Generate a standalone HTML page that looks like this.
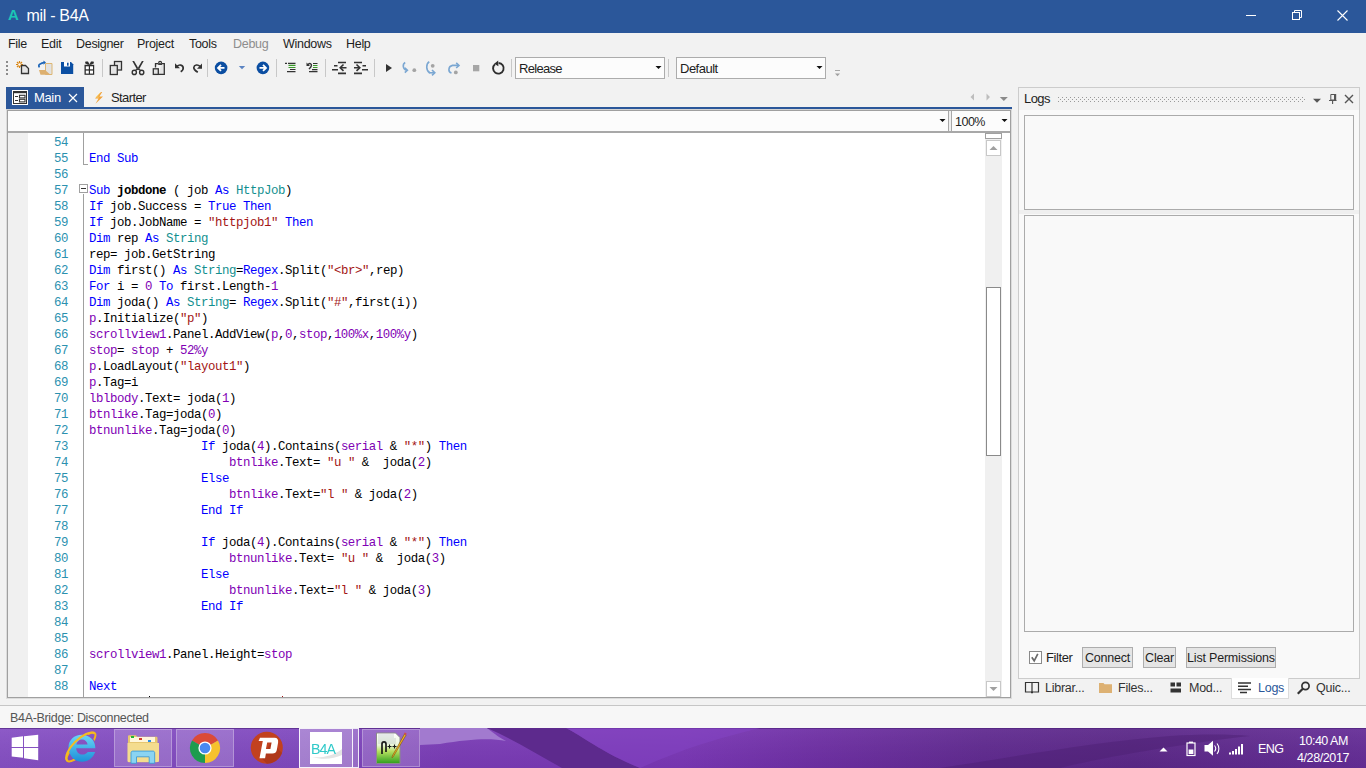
<!DOCTYPE html>
<html><head><meta charset="utf-8">
<style>
*{margin:0;padding:0;box-sizing:border-box}
html,body{width:1366px;height:768px;overflow:hidden;background:#F2F2F2;font-family:"Liberation Sans",sans-serif;position:relative}
.a{position:absolute}
svg{position:absolute;overflow:visible}
.menu{top:32px;height:25px;font-size:12.5px;color:#1E1E1E;line-height:25px;white-space:nowrap;letter-spacing:-0.3px}
.sep{position:absolute;width:1px;height:18px;background:#C4C4C4;top:59px}
.code{font-family:"Liberation Mono",monospace;font-size:12.4px;letter-spacing:-0.44px;line-height:16px;white-space:pre;color:#000;}
.ln{color:#2B91AF;text-align:right}
.k{color:#0000FF}
.ty{color:#128F8F}
.s{color:#A31515}
.v{color:#8000B4}
.n{color:#8000B4}
.b{font-weight:bold}
i{font-style:normal}
.ui{font-size:12.5px;color:#1E1E1E;white-space:nowrap;line-height:15px}
.btn{position:absolute;top:647px;height:21px;background:#E5E5E5;border:1px solid #ADADAD;font-size:12.5px;color:#1E1E1E;line-height:20px;text-align:center;white-space:nowrap;letter-spacing:-0.2px}
.tk{position:absolute;top:729px;height:39px;background:rgba(255,255,255,0.18);border:1px solid rgba(255,255,255,0.28)}
</style></head><body>
<!-- TITLE -->
<div class="a" style="left:0;top:0;width:1366px;height:33px;background:#2B579A"></div>
<div class="a" style="left:8px;top:6px;color:#1BC6B6;font-size:15px;font-weight:bold;line-height:18px">A</div>
<div class="a" style="left:26.5px;top:6px;color:#fff;font-size:16px;line-height:19px;white-space:nowrap;letter-spacing:-0.3px">mil - B4A</div>
<div class="a" style="left:1246px;top:15px;width:10px;height:1px;background:#fff"></div>
<svg style="left:1292px;top:9px" width="12" height="12"><rect x="0.5" y="3.5" width="7" height="7" fill="none" stroke="#fff"/><path d="M2.5 3.5V1.5H9.5V8.5H7.5" fill="none" stroke="#fff"/></svg>
<svg style="left:1337px;top:10px" width="12" height="12"><path d="M0.5 0.5L10.5 10.5M10.5 0.5L0.5 10.5" stroke="#fff" stroke-width="1.1"/></svg>

<!-- MENU -->
<div class="a menu" style="left:8px">File</div>
<div class="a menu" style="left:41px">Edit</div>
<div class="a menu" style="left:76px">Designer</div>
<div class="a menu" style="left:137px">Project</div>
<div class="a menu" style="left:189px">Tools</div>
<div class="a menu" style="left:233px;color:#8D8D8D">Debug</div>
<div class="a menu" style="left:283px">Windows</div>
<div class="a menu" style="left:346px">Help</div>

<!-- TOOLBAR -->
<svg style="left:0;top:0" width="1" height="1">
 <g fill="#8C8C8C"><rect x="6" y="61" width="2" height="2"/><rect x="6" y="65" width="2" height="2"/><rect x="6" y="69" width="2" height="2"/><rect x="6" y="73" width="2" height="2"/></g>
 <!-- new -->
 <g stroke="#D98512" stroke-width="1.2"><path d="M19.5 61v7M16 64.5h7M17 62l5 5M22 62l-5 5"/></g>
 <circle cx="19.5" cy="64.5" r="1.3" fill="#fff"/>
 <path d="M21.5 65.5h4l3 3v5h-7z" fill="#E4E4E4" stroke="#333" stroke-width="1.3"/>
 <!-- open -->
 <path d="M45.5 63.5h6.5v11h-6.5z" fill="#E2E2E2" stroke="#DDB673" stroke-width="1"/>
 <path d="M39 70h6l5.5 4.7H40.5z" fill="#DDB070"/>
 <path d="M39.5 67.3c-1.5-1.5-.5-3 1.2-3.6c1.5-.5 2-1 3.3-1.2" fill="none" stroke="#1B64B8" stroke-width="1.7"/>
 <path d="M43.5 60.5l2.5 2-2.5 2.2z" fill="#1B64B8"/>
 <!-- save -->
 <path d="M61 62h10l2.2 2.2V74H61z" fill="#0B4FA3"/>
 <rect x="64" y="62" width="6" height="4.5" fill="#fff"/>
 <rect x="67" y="62.7" width="1.6" height="3" fill="#0B4FA3"/>
 <!-- gift -->
 <rect x="84.5" y="64.8" width="9.7" height="10" fill="#2D2D2D"/>
 <g fill="#fff"><rect x="85.8" y="66.3" width="3" height="3"/><rect x="90" y="66.3" width="3" height="3"/><rect x="85.8" y="70.6" width="3" height="3"/><rect x="90" y="70.6" width="3" height="3"/></g>
 <path d="M85.5 61.5h2.5l1.5 2.8 1.5-2.8h2.5l.5 1.8-3 1.5h-3l-3-1.5z" fill="#2D2D2D"/>
 <rect x="102" y="59" width="1" height="18" fill="#C8C8C8"/>
 <!-- copy -->
 <rect x="114.5" y="61.5" width="7" height="8.5" fill="#E4E4E4" stroke="#333" stroke-width="1.3"/>
 <rect x="110.3" y="65.5" width="7" height="9" fill="#E4E4E4" stroke="#333" stroke-width="1.3"/>
 <!-- cut -->
 <g fill="none" stroke="#333" stroke-width="1.4"><circle cx="134.3" cy="72.4" r="2.1"/><circle cx="141.7" cy="72.4" r="2.1"/></g><path d="M132.3 61h1.8l4.4 7.6-1.1 1.6z M143.7 61h-1.8l-4.4 7.6 1.1 1.6z" fill="#333"/><path d="M135.2 70.5l2.8-1.7 2.8 1.7" fill="none" stroke="#333" stroke-width="1.3"/>
 <!-- paste -->
 <path d="M155.5 67.5v-3.8h2.7M162 63.7h2.3v10.7h-6" fill="#E4E4E4" stroke="#333" stroke-width="1.3"/>
 <path d="M158.2 64.3h3.8" stroke="#333" stroke-width="1.3"/>
 <circle cx="160.1" cy="62.8" r="1.4" fill="none" stroke="#333" stroke-width="1.2"/>
 <rect x="153.3" y="68.8" width="5" height="5.6" fill="#E4E4E4" stroke="#333" stroke-width="1.3"/>
 <!-- undo -->
 <path d="M177 66.3c2-2 6-1.8 6.2 1.6c.1 1.7-1 3-2.5 3.8" fill="none" stroke="#333" stroke-width="1.7"/>
 <path d="M175 63.2v5h5z" fill="#333"/>
 <!-- redo -->
 <path d="M200 66.3c-2-2-5.8-1.8-6.2 1.2c-.2 1.7 2 3.5 4 4.8" fill="none" stroke="#333" stroke-width="1.7"/>
 <path d="M202 63.6v5.2h-5z" fill="#333"/>
 <rect x="207" y="59" width="1" height="18" fill="#C8C8C8"/>
 <!-- back/forward -->
 <circle cx="221.1" cy="67.9" r="6.3" fill="#0B4EA2"/>
 <path d="M224.5 67.9h-6.2M221 64.9l-3 3 3 3" fill="none" stroke="#fff" stroke-width="1.8"/>
 <path d="M238.8 66h6.4l-3.2 3.2z" fill="#5B83C2"/>
 <circle cx="262.9" cy="67.9" r="6.3" fill="#0B4EA2"/>
 <path d="M259.5 67.9h6.2M263 64.9l3 3-3 3" fill="none" stroke="#fff" stroke-width="1.8"/>
 <rect x="276" y="59" width="1" height="18" fill="#C8C8C8"/>
 <!-- indent icons -->
 <g stroke="#333" stroke-width="1.2"><path d="M285 63.3h2M288 63.3h7.5M290 69.5h5.5M287 71.6h8.5"/></g>
 <g stroke="#3A9A2A" stroke-width="1.2"><path d="M288.5 65.4h7M288.5 67.5h7"/></g>
 <path d="M307.8 64.8c1.5-2.2 4-1.2 3.6.8c-.3 1.5-1.5 2.5-2.5 3.5" fill="none" stroke="#333" stroke-width="1.4"/>
 <path d="M306.5 62.5v3.5h3.5z" fill="#333"/>
 <g stroke="#333" stroke-width="1.2"><path d="M313 63.5h4.5M312 69.6h5.5M309 71.7h8.5"/></g>
 <g stroke="#3A9A2A" stroke-width="1.2"><path d="M313 65.5h4.5M313 67.5h4.5"/></g>
 <rect x="325" y="59" width="1" height="18" fill="#C8C8C8"/>
 <g stroke="#333" stroke-width="1.6"><path d="M338 62.5h8M338 73.4h8M334 65.8h3.5M332 69.8h6M341 67.7h5.5"/></g>
 <path d="M343.5 64.5l-3.3 3.2 3.3 3.2" fill="none" stroke="#333" stroke-width="1.6"/>
 <g stroke="#333" stroke-width="1.6"><path d="M354 62.5h8M354 73.4h8M362.5 65.8h3.5M362 69.8h6M354 67.7h5.5"/></g>
 <path d="M356.5 64.5l3.3 3.2-3.3 3.2" fill="none" stroke="#333" stroke-width="1.6"/>
 <rect x="374" y="59" width="1" height="18" fill="#C8C8C8"/>
 <!-- run -->
 <path d="M386 64v8l6-4z" fill="#333"/>
 <!-- step icons -->
 <g fill="none" stroke="#7BA7D2" stroke-width="1.6">
  <path d="M405.2 62.5c-3 1.8-2.5 6.5 1.5 7.8"/><path d="M404.8 67.7l2.6 2.6-2.6 2.4"/>
  <path d="M429.3 61.8c-3.5 2-3.5 9 0.5 11"/><path d="M432 70l2.8 2.8L432 75.3" />
  <path d="M428.8 72.8h5.5"/>
  <path d="M451.5 73c-3.6-1-3.6-6.5 1-7.6h6"/><path d="M456.2 62.8l2.8 2.6-2.8 2.6"/>
 </g>
 <circle cx="414.3" cy="70.2" r="1.9" fill="#A4A4A4"/>
 <circle cx="432.7" cy="65.8" r="1.9" fill="#A4A4A4"/>
 <circle cx="455.8" cy="72.4" r="1.9" fill="#A4A4A4"/>
 <rect x="473" y="65" width="6.3" height="6.3" fill="#A6A6A6"/>
 <!-- restart -->
 <path d="M495 64.2a5.3 5.3 0 1 0 3.6-1.2" fill="none" stroke="#2D2D2D" stroke-width="1.9"/>
 <path d="M498.2 60.5l-4 3.2 4.2 2.5z" fill="#2D2D2D"/>
 <rect x="511" y="59" width="1" height="18" fill="#C8C8C8"/>
 <rect x="668" y="59" width="1" height="18" fill="#C8C8C8"/>
 <path d="M655.5 66h6l-3 3z M816.5 66h6l-3 3z" fill="#111"/>
 <rect x="835" y="70" width="5" height="1" fill="#A8A8A8"/><path d="M835 73.5h5l-2.5 2.7z" fill="#A0A0A0"/>
</svg>
<div class="a" style="left:515px;top:57px;width:150px;height:22px;background:#FCFCFC;border:1px solid #ACACAC"></div>
<div class="a ui" style="left:519px;top:61px;font-size:13px;letter-spacing:-0.7px">Release</div>
<div class="a" style="left:676px;top:57px;width:150px;height:22px;background:#FCFCFC;border:1px solid #ACACAC"></div>
<div class="a ui" style="left:680px;top:61px;font-size:13px;letter-spacing:-0.5px">Default</div>
<svg style="left:0;top:0" width="1" height="1"><path d="M655.5 66h6l-3 3z M816.5 66h6l-3 3z" fill="#111"/></svg>
<!-- TABS -->
<div class="a" style="left:6px;top:87px;width:78px;height:20px;background:#2B579A"></div>
<div class="a" style="left:6px;top:107px;width:1006px;height:2px;background:#2B579A"></div>
<div class="a" style="left:12px;top:90px;width:16px;height:15px;background:#fff"></div>
<svg style="left:0;top:0" width="1" height="1">
 <rect x="13.5" y="91.5" width="13" height="12" fill="#fff" stroke="#333"/>
 <rect x="13" y="91" width="14" height="2.2" fill="#333"/>
 <path d="M15 96.5h3M15 100.5h3" stroke="#333" stroke-width="1.2"/>
 <rect x="19.5" y="95.3" width="5.5" height="2.6" fill="none" stroke="#333" stroke-width="1.1"/>
 <rect x="19.5" y="99.3" width="5.5" height="2.6" fill="none" stroke="#333" stroke-width="1.1"/>
 <path d="M69 94l8 8M77 94l-8 8" stroke="#fff" stroke-width="1.2"/>
 <path d="M101 92l-6 6.5h3.5l-3 5.2 7.5-7.2h-3.6l2.8-4.5z" fill="#F2A33A"/>
 <path d="M100 93l-3.6 4.2h2.6" fill="none" stroke="#F7D26A" stroke-width="0.8"/>
 <path d="M974 93.5v7l-3.5-3.5z M986.5 93.5v7l3.5-3.5z" fill="#BDBDBD"/>
 <path d="M999.8 97h8l-4 4z" fill="#8A8A8A"/>
</svg>
<div class="a ui" style="left:34px;top:90px;color:#fff;font-size:13px;letter-spacing:-0.35px">Main</div>
<div class="a ui" style="left:111px;top:90px;font-size:13px;letter-spacing:-0.6px">Starter</div>

<!-- EDITOR FRAME -->
<div class="a" style="left:6px;top:109px;width:1006px;height:1px;background:#D4D4D4"></div>
<div class="a" style="left:6px;top:110px;width:1006px;height:589px;background:#DCDCDC"></div>
<div class="a" style="left:7px;top:110px;width:1004px;height:588px;background:#fff;border:1px solid #A0A0A0"></div>
<div class="a" style="left:8px;top:111px;width:941px;height:20px;background:#FCFCFC;border-right:1px solid #A8A8A8"></div>
<div class="a" style="left:949px;top:111px;width:2px;height:20px;background:#F0F0F0"></div>
<div class="a" style="left:951px;top:111px;width:59px;height:20px;background:#FCFCFC;border-left:1px solid #A8A8A8"></div>
<div class="a" style="left:8px;top:131px;width:1002px;height:2px;background:#A8A8A8"></div>
<div class="a ui" style="left:955px;top:115px;letter-spacing:-0.5px">100%</div>
<svg style="left:0;top:0" width="1" height="1"><path d="M939.5 119h6l-3 3z M1001.5 119h6l-3 3z" fill="#111"/></svg>
<div class="a" style="left:8px;top:133px;width:20px;height:564px;background:#F0F0F0"></div>
<!-- fold markers -->
<div class="a" style="left:83px;top:133px;width:1px;height:31px;background:#A0A0A0"></div>
<div class="a" style="left:83px;top:164px;width:5px;height:1px;background:#A0A0A0"></div>
<div class="a" style="left:79px;top:184px;width:9px;height:9px;border:1px solid #A0A0A0;background:#fff"></div>
<div class="a" style="left:81px;top:188px;width:5px;height:1px;background:#333"></div>
<div class="a" style="left:83px;top:194px;width:1px;height:503px;background:#A0A0A0"></div>
<!-- scrollbar -->
<div class="a" style="left:985px;top:133px;width:17px;height:564px;background:#F0F0F0"></div>
<div class="a" style="left:985px;top:133px;width:17px;height:6px;background:#fff;border:1px solid #A0A0A0"></div>
<div class="a" style="left:986px;top:140px;width:15px;height:16px;background:#fff;border:1px solid #C8C8C8"></div>
<div class="a" style="left:986px;top:287px;width:15px;height:169px;background:#fff;border:1px solid #8A8A8A"></div>
<div class="a" style="left:986px;top:681px;width:15px;height:16px;background:#fff;border:1px solid #C8C8C8"></div>
<div class="a" style="left:1002px;top:133px;width:8px;height:564px;background:#fff"></div>
<svg style="left:0;top:0" width="1" height="1"><path d="M989.5 150h8l-4-4z M989.5 687h8l-4 4z" fill="#A0A0A0"/></svg>
<div class="a" style="left:149px;top:696px;width:1px;height:1px;background:#000"></div>
<div class="a" style="left:282px;top:696px;width:1px;height:1px;background:#A31515"></div>
<div id="code"><div class="a code ln" style="left:28px;top:135px;width:40px">54
55
56
57
58
59
60
61
62
63
64
65
66
67
68
69
70
71
72
73
74
75
76
77
78
79
80
81
82
83
84
85
86
87
88</div><div class="a code" style="left:89px;top:135px">
<i class="k">End Sub</i>

<i class="k">Sub</i> <i class="b">jobdone</i> ( job <i class="k">As</i> <i class="ty">HttpJob</i>)
<i class="k">If</i> job.Success = <i class="k">True</i> <i class="k">Then</i>
<i class="k">If</i> job.JobName = <i class="s">"httpjob1"</i> <i class="k">Then</i>
<i class="k">Dim</i> rep <i class="k">As</i> <i class="ty">String</i>
rep= job.GetString
<i class="k">Dim</i> first() <i class="k">As</i> <i class="ty">String</i>=<i class="k">Regex</i>.Split(<i class="s">"&lt;br&gt;"</i>,rep)
<i class="k">For</i> i = <i class="n">0</i> <i class="k">To</i> first.Length-<i class="n">1</i>
<i class="k">Dim</i> joda() <i class="k">As</i> <i class="ty">String</i>= <i class="k">Regex</i>.Split(<i class="s">"#"</i>,first(i))
<i class="v">p</i>.Initialize(<i class="s">"p"</i>)
<i class="v">scrollview1</i>.Panel.AddView(<i class="v">p</i>,<i class="n">0</i>,<i class="v">stop</i>,<i class="n">100%x</i>,<i class="n">100%y</i>)
<i class="v">stop</i>= <i class="v">stop</i> + <i class="n">52%y</i>
<i class="v">p</i>.LoadLayout(<i class="s">"layout1"</i>)
<i class="v">p</i>.Tag=i
<i class="v">lblbody</i>.Text= joda(<i class="n">1</i>)
<i class="v">btnlike</i>.Tag=joda(<i class="n">0</i>)
<i class="v">btnunlike</i>.Tag=joda(<i class="n">0</i>)
                <i class="k">If</i> joda(<i class="n">4</i>).Contains(<i class="v">serial</i> &amp; <i class="s">"*"</i>) <i class="k">Then</i>
                    <i class="v">btnlike</i>.Text= <i class="s">"u "</i> &amp;  joda(<i class="n">2</i>)
                <i class="k">Else</i>
                    <i class="v">btnlike</i>.Text=<i class="s">"l "</i> &amp; joda(<i class="n">2</i>)
                <i class="k">End If</i>

                <i class="k">If</i> joda(<i class="n">4</i>).Contains(<i class="v">serial</i> &amp; <i class="s">"*"</i>) <i class="k">Then</i>
                    <i class="v">btnunlike</i>.Text= <i class="s">"u "</i> &amp;  joda(<i class="n">3</i>)
                <i class="k">Else</i>
                    <i class="v">btnunlike</i>.Text=<i class="s">"l "</i> &amp; joda(<i class="n">3</i>)
                <i class="k">End If</i>


<i class="v">scrollview1</i>.Panel.Height=<i class="v">stop</i>

<i class="k">Next</i></div></div>
<!-- LOGS PANEL -->
<div class="a" style="left:1018px;top:87px;width:342px;height:592px;background:#F9F9F9;border:1px solid #CCCCCC"></div>
<div class="a" style="left:1019px;top:88px;width:340px;height:22px;background:#F2F2F2"></div>
<div class="a ui" style="left:1024px;top:91px;font-size:13px;letter-spacing:-0.6px">Logs</div>
<svg style="left:0;top:0" width="1" height="1">
 <path fill="#9A9A9A" d="M1058 97h1v1h-1zM1062 97h1v1h-1zM1066 97h1v1h-1zM1070 97h1v1h-1zM1074 97h1v1h-1zM1078 97h1v1h-1zM1082 97h1v1h-1zM1086 97h1v1h-1zM1090 97h1v1h-1zM1094 97h1v1h-1zM1098 97h1v1h-1zM1102 97h1v1h-1zM1106 97h1v1h-1zM1110 97h1v1h-1zM1114 97h1v1h-1zM1118 97h1v1h-1zM1122 97h1v1h-1zM1126 97h1v1h-1zM1130 97h1v1h-1zM1134 97h1v1h-1zM1138 97h1v1h-1zM1142 97h1v1h-1zM1146 97h1v1h-1zM1150 97h1v1h-1zM1154 97h1v1h-1zM1158 97h1v1h-1zM1162 97h1v1h-1zM1166 97h1v1h-1zM1170 97h1v1h-1zM1174 97h1v1h-1zM1178 97h1v1h-1zM1182 97h1v1h-1zM1186 97h1v1h-1zM1190 97h1v1h-1zM1194 97h1v1h-1zM1198 97h1v1h-1zM1202 97h1v1h-1zM1206 97h1v1h-1zM1210 97h1v1h-1zM1214 97h1v1h-1zM1218 97h1v1h-1zM1222 97h1v1h-1zM1226 97h1v1h-1zM1230 97h1v1h-1zM1234 97h1v1h-1zM1238 97h1v1h-1zM1242 97h1v1h-1zM1246 97h1v1h-1zM1250 97h1v1h-1zM1254 97h1v1h-1zM1258 97h1v1h-1zM1262 97h1v1h-1zM1266 97h1v1h-1zM1270 97h1v1h-1zM1274 97h1v1h-1zM1278 97h1v1h-1zM1282 97h1v1h-1zM1286 97h1v1h-1zM1290 97h1v1h-1zM1294 97h1v1h-1zM1298 97h1v1h-1zM1302 97h1v1h-1zM1060 99h1v1h-1zM1064 99h1v1h-1zM1068 99h1v1h-1zM1072 99h1v1h-1zM1076 99h1v1h-1zM1080 99h1v1h-1zM1084 99h1v1h-1zM1088 99h1v1h-1zM1092 99h1v1h-1zM1096 99h1v1h-1zM1100 99h1v1h-1zM1104 99h1v1h-1zM1108 99h1v1h-1zM1112 99h1v1h-1zM1116 99h1v1h-1zM1120 99h1v1h-1zM1124 99h1v1h-1zM1128 99h1v1h-1zM1132 99h1v1h-1zM1136 99h1v1h-1zM1140 99h1v1h-1zM1144 99h1v1h-1zM1148 99h1v1h-1zM1152 99h1v1h-1zM1156 99h1v1h-1zM1160 99h1v1h-1zM1164 99h1v1h-1zM1168 99h1v1h-1zM1172 99h1v1h-1zM1176 99h1v1h-1zM1180 99h1v1h-1zM1184 99h1v1h-1zM1188 99h1v1h-1zM1192 99h1v1h-1zM1196 99h1v1h-1zM1200 99h1v1h-1zM1204 99h1v1h-1zM1208 99h1v1h-1zM1212 99h1v1h-1zM1216 99h1v1h-1zM1220 99h1v1h-1zM1224 99h1v1h-1zM1228 99h1v1h-1zM1232 99h1v1h-1zM1236 99h1v1h-1zM1240 99h1v1h-1zM1244 99h1v1h-1zM1248 99h1v1h-1zM1252 99h1v1h-1zM1256 99h1v1h-1zM1260 99h1v1h-1zM1264 99h1v1h-1zM1268 99h1v1h-1zM1272 99h1v1h-1zM1276 99h1v1h-1zM1280 99h1v1h-1zM1284 99h1v1h-1zM1288 99h1v1h-1zM1292 99h1v1h-1zM1296 99h1v1h-1zM1300 99h1v1h-1zM1304 99h1v1h-1zM1058 101h1v1h-1zM1062 101h1v1h-1zM1066 101h1v1h-1zM1070 101h1v1h-1zM1074 101h1v1h-1zM1078 101h1v1h-1zM1082 101h1v1h-1zM1086 101h1v1h-1zM1090 101h1v1h-1zM1094 101h1v1h-1zM1098 101h1v1h-1zM1102 101h1v1h-1zM1106 101h1v1h-1zM1110 101h1v1h-1zM1114 101h1v1h-1zM1118 101h1v1h-1zM1122 101h1v1h-1zM1126 101h1v1h-1zM1130 101h1v1h-1zM1134 101h1v1h-1zM1138 101h1v1h-1zM1142 101h1v1h-1zM1146 101h1v1h-1zM1150 101h1v1h-1zM1154 101h1v1h-1zM1158 101h1v1h-1zM1162 101h1v1h-1zM1166 101h1v1h-1zM1170 101h1v1h-1zM1174 101h1v1h-1zM1178 101h1v1h-1zM1182 101h1v1h-1zM1186 101h1v1h-1zM1190 101h1v1h-1zM1194 101h1v1h-1zM1198 101h1v1h-1zM1202 101h1v1h-1zM1206 101h1v1h-1zM1210 101h1v1h-1zM1214 101h1v1h-1zM1218 101h1v1h-1zM1222 101h1v1h-1zM1226 101h1v1h-1zM1230 101h1v1h-1zM1234 101h1v1h-1zM1238 101h1v1h-1zM1242 101h1v1h-1zM1246 101h1v1h-1zM1250 101h1v1h-1zM1254 101h1v1h-1zM1258 101h1v1h-1zM1262 101h1v1h-1zM1266 101h1v1h-1zM1270 101h1v1h-1zM1274 101h1v1h-1zM1278 101h1v1h-1zM1282 101h1v1h-1zM1286 101h1v1h-1zM1290 101h1v1h-1zM1294 101h1v1h-1zM1298 101h1v1h-1zM1302 101h1v1h-1z"/>
 <path d="M1313 98.7h8l-4 4z" fill="#555"/>
 <path d="M1330.8 94.5h4v5.5h-4z" fill="none" stroke="#555" stroke-width="1"/>
 <rect x="1334" y="94" width="2.2" height="6.5" fill="#555"/>
 <path d="M1329 100.5h7.5M1332.6 100.5v3.5" stroke="#555" stroke-width="1.1"/>
 <path d="M1345 95l8 8M1353 95l-8 8" stroke="#555" stroke-width="1.4"/>
</svg>
<div class="a" style="left:1024px;top:115px;width:330px;height:95px;background:#F9F9F9;border:1px solid #ABABAB"></div>
<div class="a" style="left:1019px;top:210px;width:340px;height:4px;background:#EFEFEF"></div>
<div class="a" style="left:1024px;top:215px;width:330px;height:417px;background:#F9F9F9;border:1px solid #ABABAB"></div>
<div class="a" style="left:1029px;top:651px;width:13px;height:13px;background:#fff;border:1px solid #8A8A8A"></div>
<svg style="left:0;top:0" width="1" height="1"><path d="M1031.8 657.2l2.4 3.6 3.6-7" fill="none" stroke="#6A6A6A" stroke-width="1.7"/></svg>
<div class="a ui" style="left:1046px;top:650px;font-size:13px;letter-spacing:-0.4px">Filter</div>
<div class="btn" style="left:1082px;width:51px">Connect</div>
<div class="btn" style="left:1143px;width:33px">Clear</div>
<div class="btn" style="left:1186px;width:90px">List Permissions</div>
<!-- bottom tabs -->
<div class="a" style="left:1231px;top:678px;width:58px;height:21px;background:#fff;border:1px solid #DCDCDC;border-top:none"></div>
<svg style="left:0;top:0" width="1" height="1">
 <path d="M1025.5 682.5h6.5v9.5h-6.5z M1032 682.5h6.5v9.5H1032z" fill="none" stroke="#333" stroke-width="1.2"/>
 <path d="M1031 692.5h2" stroke="#333" stroke-width="1.5"/>
 <path d="M1099 683h4.5l1 1.3h7.5v8.6H1099z" fill="#DDB173"/>
 <rect x="1170.5" y="682.5" width="4.5" height="4" fill="#333"/><rect x="1176.5" y="682.5" width="4.5" height="4" fill="#333"/>
 <rect x="1170.5" y="688.5" width="10.5" height="4" fill="#333"/>
 <path d="M1238 683h13M1238 686.2h10M1238 689.4h13M1240 692.6h7" stroke="#333" stroke-width="1.5"/>
 <circle cx="1305.5" cy="686" r="3.6" fill="none" stroke="#333" stroke-width="1.7"/>
 <path d="M1302.8 688.7l-5 5" stroke="#333" stroke-width="2.2"/>
</svg>
<div class="a ui" style="left:1045px;top:681px;font-size:12.5px;letter-spacing:-0.25px;color:#333">Librar...</div>
<div class="a ui" style="left:1118px;top:681px;font-size:12.5px;letter-spacing:-0.25px;color:#333">Files...</div>
<div class="a ui" style="left:1189px;top:681px;font-size:12.5px;letter-spacing:-0.25px;color:#333">Mod...</div>
<div class="a ui" style="left:1258px;top:681px;font-size:12.5px;letter-spacing:-0.25px;color:#2B579A">Logs</div>
<div class="a ui" style="left:1316px;top:681px;font-size:12.5px;letter-spacing:-0.25px;color:#333">Quic...</div>

<!-- STATUS BAR -->
<div class="a" style="left:0;top:705px;width:1366px;height:23px;background:#F7F7F7;border-top:1px solid #C6C6C6"></div>
<div class="a ui" style="left:10px;top:711px;color:#555;letter-spacing:-0.33px">B4A-Bridge: Disconnected</div>
<!-- TASKBAR -->
<svg style="left:0;top:728px" width="1366" height="40" viewBox="0 0 1366 40">
 <defs>
  <linearGradient id="tg" x1="0" y1="0" x2="1366" y2="0" gradientUnits="userSpaceOnUse">
   <stop offset="0" stop-color="#8650C4"/>
   <stop offset="0.22" stop-color="#8049BF"/>
   <stop offset="0.33" stop-color="#7A3CB6"/>
   <stop offset="0.5" stop-color="#7A37B6"/>
   <stop offset="0.6" stop-color="#6E2FA4"/>
   <stop offset="0.72" stop-color="#602A90"/>
   <stop offset="0.83" stop-color="#5B2888"/>
   <stop offset="1" stop-color="#652D97"/>
  </linearGradient>
  <linearGradient id="tv" x1="0" y1="0" x2="0" y2="1">
   <stop offset="0" stop-color="#fff" stop-opacity="0.06"/>
   <stop offset="1" stop-color="#000" stop-opacity="0.04"/>
  </linearGradient>
 </defs>
 <rect width="1366" height="40" fill="url(#tg)"/>
 <rect width="1366" height="40" fill="url(#tv)"/>
 <path d="M0 0H1366V1H0z" fill="#4A1E78" opacity="0.6"/>
 <path d="M420 0H487C495 6 500 10 506 13C490 10 470 11 440 16L420 17z" fill="#A27ACF"/>
 <path d="M487 0H566C585 10 605 26 640 40H562C540 28 515 12 487 0z" fill="#5D2A8D"/>
 <path d="M566 0H760C720 10 690 18 640 40C605 26 585 10 566 0z" fill="#8443C2" opacity="0.55"/>
 <path d="M940 40C1010 30 1090 14 1170 8C1200 6 1230 6 1250 8C1180 16 1100 30 1060 40z" fill="#4C1E72" opacity="0.45"/>
 
</svg>
<!-- start -->
<svg style="left:0;top:0" width="1" height="1">
 <path d="M11.7 737.7L23 736.3V747H11.7z M24 736.2L38.2 734.7V747H24z M11.7 748H23V757.8L11.7 756.6z M24 748H38.2V760.2L24 758.2z" fill="#fff"/>
</svg>
<!-- IE -->
<svg style="left:0;top:0" width="1" height="1">
 <defs><linearGradient id="ieg" x1="0" y1="0" x2="0" y2="1"><stop offset="0" stop-color="#6AD6F7"/><stop offset="1" stop-color="#1C8FD8"/></linearGradient></defs>
 <mask id="iem" maskUnits="userSpaceOnUse" x="50" y="720" width="60" height="60"><rect x="50" y="720" width="60" height="60" fill="#fff"/><circle cx="82" cy="748" r="13.4" fill="#000"/></mask><ellipse cx="81" cy="747" rx="19.5" ry="6" transform="rotate(-45 81 747)" fill="none" stroke="#F3B41A" stroke-width="2" mask="url(#iem)"/>
 <path d="M68.5 747.2c0-7.2 5.8-12.5 13.3-12.5 7.6 0 13.5 5.5 13.5 12.8v.7H76.2c.3 4 2.8 6.3 6.2 6.3 2.4 0 4.4-1.1 5.4-2.6h7.3c-1.8 5.7-6.8 9.8-12.9 9.8-7.7 0-13.7-6-13.7-14.5z M76.4 744.6h11.2c-.4-3-2.6-5-5.6-5s-5.2 2-5.6 5z" fill="url(#ieg)" fill-rule="evenodd"/>
 <path d="M67.3 760.7C64 757.5 68 749 75 742c7-7 16-11.5 19.5-8.5" fill="none" stroke="#F5BC22" stroke-width="2"/>
</svg>
<!-- explorer -->
<div class="tk" style="left:114px;width:58px;top:729px;height:38px"></div>
<svg style="left:0;top:0" width="1" height="1">
 <path d="M128 736.5c0-.8.5-1.3 1.3-1.3h6.5l1.6 1.6h18.8c.8 0 1.3.5 1.3 1.3V761c0 .8-.5 1.3-1.3 1.3h-27c-.8 0-1.3-.5-1.3-1.3z" fill="#E6C670"/>
 <rect x="130" y="737" width="25" height="5" fill="#FFF6DA"/>
 <rect x="131" y="736" width="3" height="2" fill="#22B833"/><rect x="139" y="738" width="3" height="2" fill="#D83A2A"/><rect x="148" y="740" width="3" height="2" fill="#2A8FE8"/>
 <path d="M127.5 743h31.5v17.8c0 .8-.5 1.3-1.3 1.3h-29c-.8 0-1.2-.5-1.2-1.3z" fill="#F4DC8E"/>
 <path d="M131 763.3v-10.5c0-1 .8-1.7 1.7-1.7h20.3c1 0 1.7.8 1.7 1.7v10.5h-5.5v-6.5h-12.7v6.5z" fill="#8AD4F2" stroke="#3D9BD6" stroke-width="0.9"/>
</svg>
<!-- chrome -->
<div class="tk" style="left:176px;width:58px;top:729px;height:38px"></div>
<svg style="left:0;top:0" width="1" height="1">
 <path d="M205 748L192 740.5A15 15 0 0 1 218 740.5Z" fill="#DB4A37"/>
 <path d="M205 748L218 740.5A15 15 0 0 1 205 763Z" fill="#F6C22E"/>
 <path d="M205 748L205 763A15 15 0 0 1 192 740.5Z" fill="#1E9C4E"/>
 <path d="M198.6 745.5L192 740.5 M211.2 748L218 740.5 M201 753.5L205 763" stroke="none"/>
 <circle cx="205" cy="748" r="6.6" fill="#fff"/>
 <circle cx="205" cy="748" r="5.3" fill="#4A89F0"/>
</svg>
<!-- psiphon -->
<svg style="left:0;top:0" width="1" height="1">
 <circle cx="266.8" cy="747.8" r="16" fill="#C2411F"/>
 <path d="M271 742l11 11a16 16 0 0 1-15 10.8l-5-5z" fill="#A7341A" opacity="0.7"/>
 <path d="M260 737.8h14.5c2.8 0 4 2 3.6 4.6l-1.3 7.5c-.4 2.4-2 3.6-4.4 3.6h-6.5l-.8 4.8h-5.6l3.3-17.3h-4.2z M267.2 742.6l-1.3 6.5h4.5l1.2-6.5z" fill="#fff" fill-rule="evenodd"/>
</svg>
<!-- B4A active -->
<div class="a" style="left:299px;top:728px;width:54px;height:40px;background:rgba(255,255,255,0.3);border:1.5px solid rgba(255,255,255,0.9)"></div>
<div class="a" style="left:353px;top:728px;width:6px;height:40px;background:rgba(255,255,255,0.22);border:1.5px solid rgba(255,255,255,0.85);border-left:none"></div>
<div class="a" style="left:310px;top:732px;width:32px;height:32px;background:#fff"></div>
<svg style="left:0;top:0" width="1" height="1"><path d="M312 757c8 1 20 0 30-8v6c-8 4-20 5-30 2z" fill="#E4E4E4"/></svg>
<div class="a" style="left:311px;top:741px;font-size:15px;color:#2FC9C9;line-height:16px;letter-spacing:-1px;transform:scaleX(0.95);transform-origin:left">B4A</div>
<!-- notepad++ -->
<div class="tk" style="left:362px;width:58px;top:729px;height:38px"></div>
<svg style="left:0;top:0" width="1" height="1">
 <defs><linearGradient id="npg" x1="0" y1="0" x2="0" y2="1"><stop offset="0" stop-color="#fff"/><stop offset="0.4" stop-color="#EAF6D8"/><stop offset="0.6" stop-color="#B6E060"/><stop offset="1" stop-color="#2E9E1E"/></linearGradient></defs>
 <path d="M376.5 733h19l4.5 4.5v26h-23.5z" fill="url(#npg)" stroke="#8A8A8A" stroke-width="1"/>
 <path d="M378 735h16M378 737h16M378 739h18M378 741h18M378 743h18" stroke="#B0B8C0" stroke-width="0.6"/>
 <path d="M382 754v-10c0-2.8 4-2.8 4 0v8" fill="none" stroke="#1A1A1A" stroke-width="1.7"/>
 <path d="M387.5 746.5h4M389.5 744.5v4M392.5 746.5h4M394.5 744.5v4" stroke="#1A1A1A" stroke-width="1.1"/>
 <path d="M404.5 734l1.6 1.1-12.8 21.5-1.2 1.2.2-1.8z" fill="#F2B322" stroke="#7A5010" stroke-width="0.6"/>
 <path d="M403.8 733.2l1.2-.8 1.6 1.1-.5 1.5z" fill="#D5484A"/>
</svg>
<!-- tray -->
<svg style="left:0;top:0" width="1" height="1">
 <path d="M1159.5 751.5h8l-4-4z" fill="#fff"/>
 <rect x="1187" y="743" width="8" height="12.5" fill="none" stroke="#fff" stroke-width="1.2"/>
 <rect x="1189" y="741.6" width="4" height="1.4" fill="#fff"/>
 <rect x="1188.6" y="749.5" width="4.8" height="4.5" fill="#fff"/>
 <path d="M1204.5 745h3.5l5-4.2v15l-5-4.2h-3.5z" fill="#fff"/>
 <path d="M1214.5 745.5c1.5 1.8 1.5 4.2 0 6M1217 743.5c2.5 3 2.5 7.5 0 10.5" fill="none" stroke="#fff" stroke-width="1.1"/>
 <rect x="1229" y="752.5" width="2" height="2" fill="#fff"/>
 <rect x="1232" y="751" width="2" height="3.5" fill="#fff"/>
 <rect x="1235" y="749" width="2" height="5.5" fill="#fff"/>
 <rect x="1238" y="746.5" width="2" height="8" fill="#fff"/>
 <rect x="1241" y="744" width="2" height="10.5" fill="#fff"/>
</svg>
<div class="a" style="left:1258px;top:742px;font-size:12.5px;color:#fff;line-height:14px;letter-spacing:-0.6px">ENG</div>
<div class="a" style="left:1299px;top:734px;font-size:12.5px;color:#fff;line-height:14px;white-space:nowrap;letter-spacing:-0.5px">10:40 AM</div>
<div class="a" style="left:1297px;top:750.5px;font-size:12.5px;color:#fff;line-height:14px;white-space:nowrap;letter-spacing:-0.4px">4/28/2017</div>
</body></html>
